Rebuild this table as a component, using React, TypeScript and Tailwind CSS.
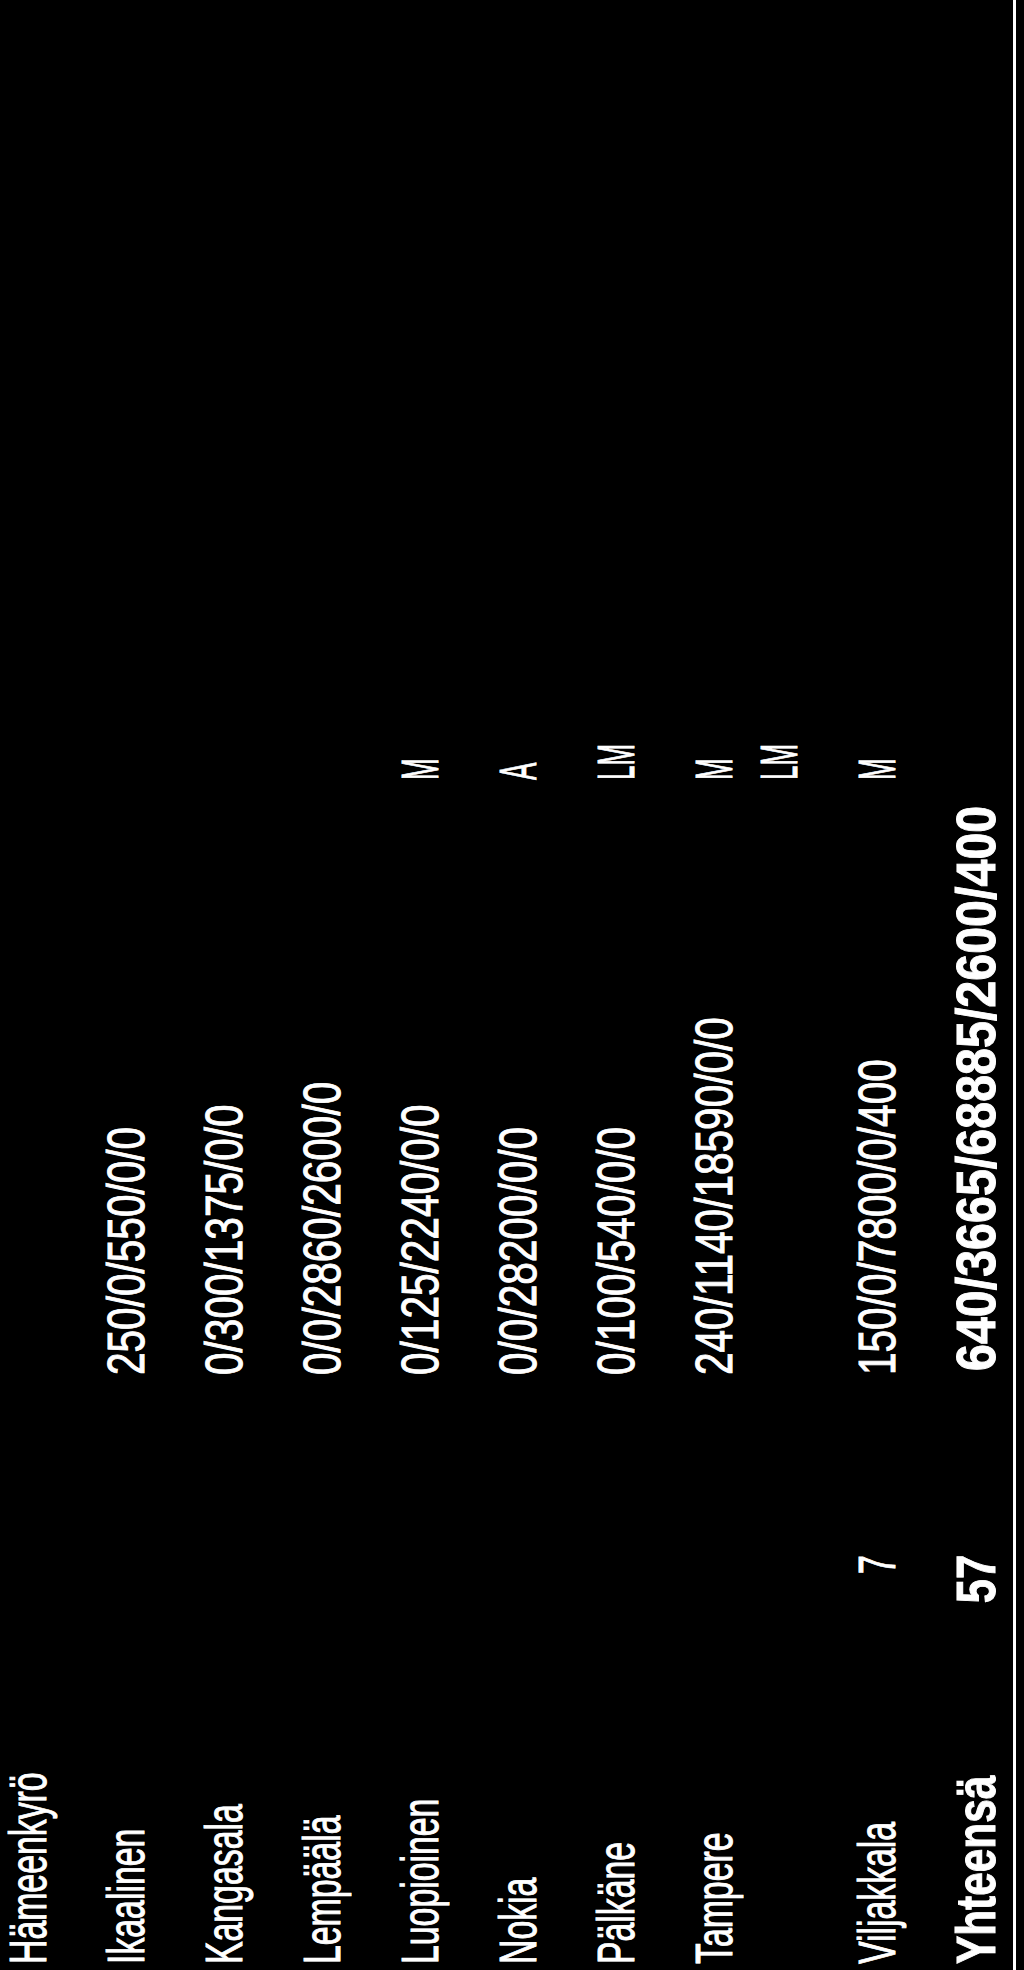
type Row = {
  name?: string;
  count?: string;
  nums?: string;
  code?: string;
  short?: boolean;
};

const rows: Row[] = [
  { name: "Hämeenkyrö" },
  { name: "Ikaalinen", nums: "250/0/550/0/0" },
  { name: "Kangasala", nums: "0/300/1375/0/0" },
  { name: "Lempäälä", nums: "0/0/2860/2600/0" },
  { name: "Luopioinen", nums: "0/125/2240/0/0", code: "M" },
  { name: "Nokia", nums: "0/0/28200/0/0", code: "A" },
  { name: "Pälkäne", nums: "0/100/540/0/0", code: "LM" },
  { name: "Tampere", nums: "240/1140/18590/0/0", code: "M", short: true },
  { code: "LM" },
  { name: "Viljakkala", count: "7", nums: "150/0/7800/0/400", code: "M" },
];

const TableRow = ({ row }: { row: Row }) => (
  <div className={`flex items-start pl-[6px] ${row.short ? "h-[65px]" : "h-[98px]"}`}>
    <div className="w-[299px] flex-none">
      {row.name && (
        <span className="inline-block whitespace-nowrap origin-left scale-x-[0.65]">{row.name}</span>
      )}
    </div>
    <div className="w-[110px] flex-none text-right">
      {row.count && (
        <span className="inline-block whitespace-nowrap origin-right scale-x-[0.66]">{row.count}</span>
      )}
    </div>
    <div className="w-[180px] flex-none" />
    <div className="w-[595px] flex-none">
      {row.nums && (
        <span className="inline-block whitespace-nowrap origin-left scale-x-[0.78]">{row.nums}</span>
      )}
    </div>
    <div className="flex-none">
      {row.code && (
        <span className="inline-block whitespace-nowrap origin-left scale-x-[0.5]">{row.code}</span>
      )}
    </div>
  </div>
);

export default function App() {
  return (
    <div className="relative w-[1024px] h-[1970px] overflow-hidden bg-black">
      {/* the scanned table is turned on its side: content top = screen left */}
      <div
        className="w-[1970px] h-[1024px] origin-top-left -rotate-90 translate-y-[1970px] pt-[2px] text-white text-[52px] leading-none [-webkit-text-stroke:1px_white]"
        style={{ fontFamily: '"Liberation Sans", Arial, sans-serif' }}
      >
        {rows.map((r, i) => (
          <TableRow key={i} row={r} />
        ))}

        <div className="flex items-start pl-[6px] h-[64px] font-bold text-[55px]">
          <div className="w-[299px] flex-none">
            <span className="inline-block whitespace-nowrap origin-left scale-x-[0.77]">Yhteensä</span>
          </div>
          <div className="w-[110px] flex-none text-right">
            <span className="inline-block whitespace-nowrap origin-right scale-x-[0.79]">57</span>
          </div>
          <div className="w-[180px] flex-none" />
          <div className="w-[595px] flex-none pl-[4px]">
            <span className="inline-block whitespace-nowrap origin-left scale-x-[0.88]">640/3665/68885/2600/400</span>
          </div>
        </div>

        <div className="h-[3px] w-full bg-white" />
      </div>
    </div>
  );
}
